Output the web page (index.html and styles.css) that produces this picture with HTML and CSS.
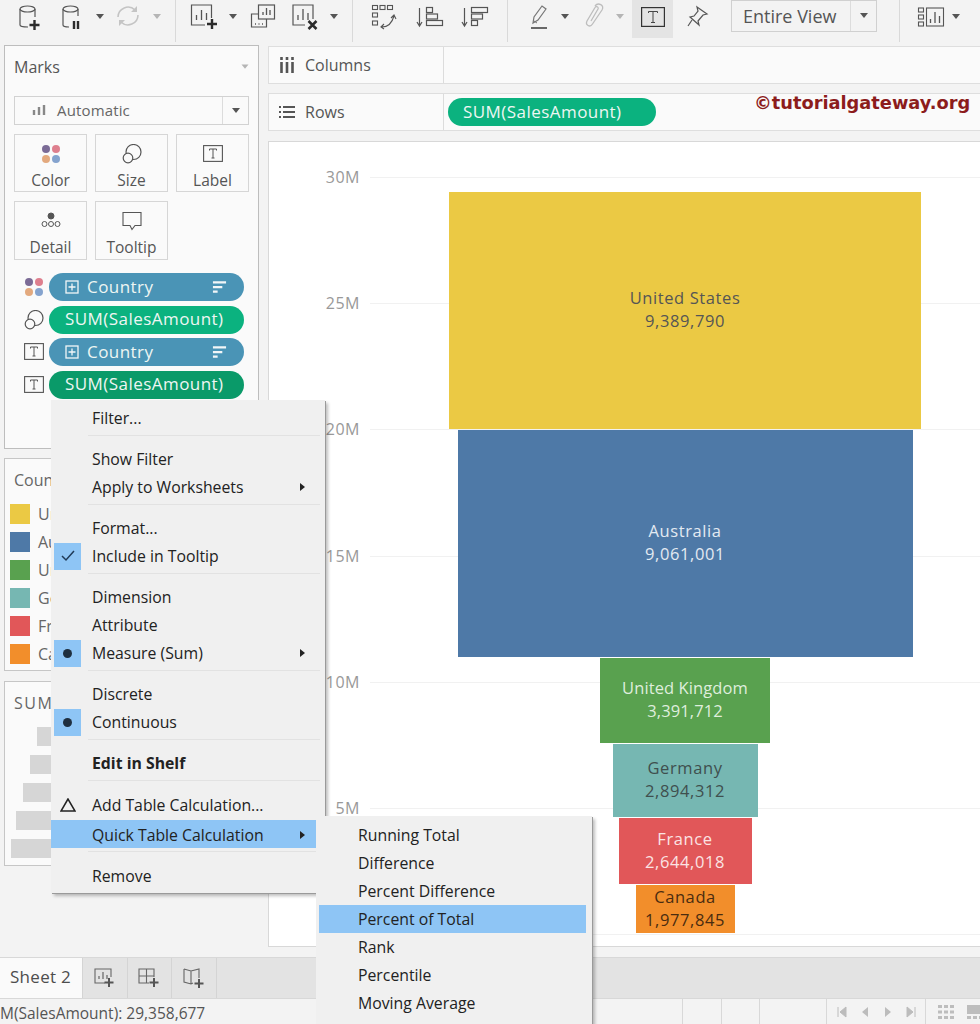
FILE: index.html
```html
<!DOCTYPE html>
<html lang="en">
<head>
<meta charset="utf-8">
<title>Tableau worksheet</title>
<link rel="stylesheet" href="styles.css">
</head>
<body>
<svg class="defs" width="0" height="0" aria-hidden="true">
  <symbol id="i-dots" viewBox="0 0 20 20">
    <circle cx="5" cy="5" r="4" fill="#7b6b96"/><circle cx="15" cy="5" r="4" fill="#de7f8e"/>
    <circle cx="5" cy="15" r="4" fill="#e3a97e"/><circle cx="15" cy="15" r="4" fill="#85a3ce"/>
  </symbol>
  <symbol id="i-size" viewBox="0 0 20 20">
    <circle cx="11.500" cy="8" r="7.500" fill="none" stroke="#555" stroke-width="1.200"/>
    <circle cx="6" cy="14" r="4.800" fill="#fafafa" stroke="#555" stroke-width="1.200"/>
  </symbol>
  <symbol id="i-t" viewBox="0 0 20 20">
    <rect x=".6" y="1.600" width="18.800" height="15.800" fill="none" stroke="#555" stroke-width="1.100"/>
    <path d="M6.500 6.500V5h7v1.500M10 5v9M8.500 14h3" fill="none" stroke="#555" stroke-width="1"/>
  </symbol>
  <symbol id="i-caret" viewBox="0 0 16 8"><path d="M4 1h8L8 6z" fill="#555"/></symbol>
  <symbol id="i-caret-l" viewBox="0 0 16 8"><path d="M4 1h8L8 6z" fill="#b5b5b5"/></symbol>
  <symbol id="i-plusbox" viewBox="0 0 14 14">
    <rect x="1" y="1" width="12" height="12" fill="none" stroke="#f2f6f8" stroke-width="1.300"/>
    <path d="M7 3.500v7M3.500 7h7" stroke="#f2f6f8" stroke-width="1.300"/>
  </symbol>
  <symbol id="i-sort" viewBox="0 0 16 14">
    <path d="M1 2h14M1 7h10M1 12h5" stroke="#f2f6f8" stroke-width="2.400"/>
  </symbol>
</svg>

<div class="app">
  <header class="toolbar">
    <svg class="tool" viewBox="0 0 28 34"><path d="M4 9v16c0 1.500 2 2 8 2M19 9v8" fill="none" stroke="#555" stroke-width="1.200"/><ellipse cx="11.500" cy="9" rx="7.500" ry="3" fill="none" stroke="#555" stroke-width="1.200"/><path d="M18.500 20v10M13.500 25h10" stroke="#2b2b2b" stroke-width="2.400"/></svg>
    <svg class="tool ml-14" viewBox="0 0 28 34"><path d="M5 9v16c0 1.500 2 2 6 2M20 9v7" fill="none" stroke="#555" stroke-width="1.200"/><ellipse cx="12.500" cy="9" rx="7.500" ry="3" fill="none" stroke="#555" stroke-width="1.200"/><path d="M16 21v8M20 21v8" stroke="#2b2b2b" stroke-width="2.400"/></svg>
    <svg class="caret ml-6"><use href="#i-caret"/></svg>
    <svg class="tool ml-6" viewBox="0 0 28 34"><path d="M4 17a10 10 0 0 1 17-7M24 15a10 10 0 0 1-17 7" fill="none" stroke="#c4c4c4" stroke-width="1.600"/><path d="M23 6v6h-6zM5 26v-6h6z" fill="#c4c4c4"/></svg>
    <svg class="caret ml-7"><use href="#i-caret-l"/></svg>
    <span class="tdiv"></span>
    <svg class="tool ml-5" viewBox="0 0 28 34"><path d="M15 25H1.500V5h20v13" fill="none" stroke="#555" stroke-width="1.200"/><path d="M6.500 20v-5M11.500 20V10M16.500 20v-7" stroke="#555" stroke-width="1.300"/><path d="M22 19v10M17 24h10" stroke="#2b2b2b" stroke-width="2.400"/></svg>
    <svg class="caret ml-7"><use href="#i-caret"/></svg>
    <svg class="tool ml-8" viewBox="0 0 28 34"><rect x="9.500" y="5" width="16" height="14" fill="#f3f3f3" stroke="#555" stroke-width="1.200"/><path d="M9 14H2.500v13h15v-8" fill="none" stroke="#555" stroke-width="1.200"/><path d="M14 15v-3M17.500 15V8M21 15v-5" stroke="#555" stroke-width="1.300"/><path d="M6 24h1M9.500 24h1M13 24h1" stroke="#555" stroke-width="1.400"/></svg>
    <svg class="tool ml-14" viewBox="0 0 28 34"><path d="M14 25H2V5h20v14" fill="none" stroke="#555" stroke-width="1.200"/><path d="M7 20v-5M12 20V9M17 20v-7" stroke="#555" stroke-width="1.300"/><path d="M17.500 21l8 8M25.500 21l-8 8" stroke="#2b2b2b" stroke-width="2.500"/></svg>
    <svg class="caret ml-7"><use href="#i-caret"/></svg>
    <span class="tdiv"></span>
    <svg class="tool ml-8" viewBox="0 0 28 34" fill="none" stroke="#555" stroke-width="1.100"><rect x="2.500" y="5.500" width="5" height="4"/><rect x="10" y="5.500" width="5" height="4"/><rect x="17.500" y="5.500" width="5" height="4"/><rect x="2.500" y="13" width="5" height="4"/><rect x="2.500" y="21" width="5" height="4"/><path d="M12 27c6 0 10-4 12-11M21 18l3-3 2 4M14 24l-3 3 3 2"/></svg>
    <svg class="tool ml-18" viewBox="0 0 28 34" fill="none" stroke="#555" stroke-width="1.200"><path d="M3.500 8v17M1 22l2.500 4 2.500-4"/><rect x="10.500" y="7.500" width="6" height="5"/><rect x="10.500" y="14" width="11" height="5"/><rect x="10.500" y="20.500" width="16" height="5"/></svg>
    <svg class="tool ml-17" viewBox="0 0 28 34" fill="none" stroke="#555" stroke-width="1.200"><path d="M3.500 8v17M1 22l2.500 4 2.500-4"/><rect x="10.500" y="7.500" width="16" height="5"/><rect x="10.500" y="14" width="11" height="5"/><rect x="10.500" y="20.500" width="6" height="5"/></svg>
    <span class="tdiv ml-8"></span>
    <svg class="tool ml-8" viewBox="0 0 28 34"><path d="M8 23l1-6L17 6l4 3-8 11z" fill="none" stroke="#777" stroke-width="1.200"/><path d="M9 21l3 2" stroke="#777"/><path d="M6 28h16" stroke="#2b2b2b" stroke-width="1.400"/></svg>
    <svg class="caret ml-4"><use href="#i-caret"/></svg>
    <svg class="tool ml-7" viewBox="0 0 28 34"><path d="M11 21L18 9c1-2-2-3.500-3-1.500L7 21c-2 4 3 7 5.500 3L22 10c3-5-4-8-7-4" fill="none" stroke="#bdbdbd" stroke-width="1.300"/></svg>
    <svg class="caret ml-4"><use href="#i-caret-l"/></svg>
    <span class="tool-on ml-4"><svg class="tbox" viewBox="0 0 24 20"><rect x=".6" y=".6" width="22.800" height="18.800" fill="none" stroke="#333" stroke-width="1.200"/><path d="M7.500 6V4.500h9V6M12 4.500v11M10 15.500h4" fill="none" stroke="#444" stroke-width="1"/></svg></span>
    <svg class="tool ml-10" viewBox="0 0 28 34"><path d="M14 7l10 7-4 1-5 6 1 4-9-8 4-1 4-5z" fill="none" stroke="#555" stroke-width="1.200"/><path d="M9 20l-4 6" stroke="#555" stroke-width="1.200"/></svg>
    <div class="fit ml-20"><span class="fit-label">Entire View</span><span class="fit-arrow"><svg class="caret"><use href="#i-caret"/></svg></span></div>
    <span class="tdiv ml-12"></span>
    <svg class="tool ml-8" viewBox="0 0 28 34" fill="none" stroke="#555" stroke-width="1.100"><rect x="1.500" y="8" width="5" height="4"/><rect x="1.500" y="15" width="5" height="4"/><rect x="1.500" y="22" width="5" height="4"/><rect x="9.500" y="8" width="17" height="18"/><path d="M13.500 23v-4M18 23V12M22.500 23v-7" stroke-width="1.300"/></svg>
    <svg class="caret ml-3"><use href="#i-caret"/></svg>
  </header>

  <main class="main">
    <aside class="side">
      <section class="card marks">
        <div class="marks-head"><span>Marks</span><svg class="caret"><use href="#i-caret-l"/></svg></div>
        <div class="marktype">
          <span class="marktype-label">
            <svg class="mini" viewBox="0 0 14 12"><path d="M2 11V6M7 11V3M12 11V1" stroke="#888" stroke-width="2.400"/></svg>
            Automatic
          </span>
          <span class="marktype-arrow"><svg class="caret"><use href="#i-caret"/></svg></span>
        </div>
        <div class="btns">
          <div class="btn"><svg class="btn-ico"><use href="#i-dots"/></svg>Color</div>
          <div class="btn"><svg class="btn-ico"><use href="#i-size"/></svg>Size</div>
          <div class="btn"><svg class="btn-ico"><use href="#i-t"/></svg>Label</div>
          <div class="btn btn-tall"><svg class="btn-ico" viewBox="0 0 20 20" fill="none" stroke="#555" stroke-width="1"><circle cx="10" cy="5" r="3" fill="#555"/><circle cx="3.500" cy="13" r="2.500"/><circle cx="10" cy="13" r="2.500"/><circle cx="16.500" cy="13" r="2.500"/></svg>Detail</div>
          <div class="btn btn-tall"><svg class="btn-ico" viewBox="0 0 20 20" fill="none" stroke="#555" stroke-width="1.100"><path d="M1 1.500h18v13h-6l-3 4-2-4H1z"/></svg>Tooltip</div>
        </div>
        <ul class="pills">
          <li class="pill-row"><svg class="pill-ico"><use href="#i-dots"/></svg><span class="pill pill-blue"><svg class="plus"><use href="#i-plusbox"/></svg>Country<svg class="sorter"><use href="#i-sort"/></svg></span></li>
          <li class="pill-row"><svg class="pill-ico"><use href="#i-size"/></svg><span class="pill pill-green">SUM(SalesAmount)</span></li>
          <li class="pill-row"><svg class="pill-ico"><use href="#i-t"/></svg><span class="pill pill-blue"><svg class="plus"><use href="#i-plusbox"/></svg>Country<svg class="sorter"><use href="#i-sort"/></svg></span></li>
          <li class="pill-row"><svg class="pill-ico"><use href="#i-t"/></svg><span class="pill pill-dark">SUM(SalesAmount)</span></li>
        </ul>
      </section>

      <section class="card legend">
        <div class="card-title">Country</div>
        <ul class="legend-list">
          <li class="legend-row"><i class="swatch c-us"></i>United States</li>
          <li class="legend-row"><i class="swatch c-au"></i>Australia</li>
          <li class="legend-row"><i class="swatch c-uk"></i>United Kingdom</li>
          <li class="legend-row"><i class="swatch c-de"></i>Germany</li>
          <li class="legend-row"><i class="swatch c-fr"></i>France</li>
          <li class="legend-row"><i class="swatch c-ca"></i>Canada</li>
        </ul>
      </section>

      <section class="card sizes">
        <div class="card-title card-title-wide">SUM(SalesAmount)</div>
        <div class="size-bars">
          <i class="size-bar" style="width:216px"></i>
          <i class="size-bar" style="width:223px"></i>
          <i class="size-bar" style="width:230px"></i>
          <i class="size-bar" style="width:237px"></i>
          <i class="size-bar" style="width:242px"></i>
        </div>
      </section>
    </aside>

    <div class="work">
      <div class="shelf shelf-cols">
        <div class="shelf-label"><svg class="shelf-ico" viewBox="0 0 16 16"><path d="M2.500 5v11M8 5v11M13.500 5v11M2.500 0v3M8 0v3M13.500 0v3" stroke="#555" stroke-width="2.600"/></svg>Columns</div>
      </div>
      <div class="shelf shelf-rows">
        <div class="shelf-label"><svg class="shelf-ico" viewBox="0 0 16 16"><path d="M4 3h12M4 8h12M4 13h12M0 3h2M0 8h2M0 13h2" stroke="#555" stroke-width="2"/></svg>Rows</div>
        <span class="pill pill-green shelf-pill">SUM(SalesAmount)</span>
        <span class="mark-wm">©tutorialgateway.org</span>
      </div>
      <div class="chart">
        <div class="axis">
          <div class="tick"><span class="tick-label">30M</span><i class="grid-line"></i></div>
          <div class="tick"><span class="tick-label">25M</span><i class="grid-line"></i></div>
          <div class="tick"><span class="tick-label">20M</span><i class="grid-line"></i></div>
          <div class="tick"><span class="tick-label">15M</span><i class="grid-line"></i></div>
          <div class="tick"><span class="tick-label">10M</span><i class="grid-line"></i></div>
          <div class="tick"><span class="tick-label">5M</span><i class="grid-line"></i></div>
          <div class="tick"><span class="tick-label">0M</span><i class="grid-line"></i></div>
        </div>
        <div class="funnel">
          <div class="bar c-us bar-us"><span>United States</span><span>9,389,790</span></div>
          <div class="bar c-au bar-au"><span>Australia</span><span>9,061,001</span></div>
          <div class="bar c-uk bar-uk"><span>United Kingdom</span><span>3,391,712</span></div>
          <div class="bar c-de bar-de"><span>Germany</span><span>2,894,312</span></div>
          <div class="bar c-fr bar-fr"><span>France</span><span>2,644,018</span></div>
          <div class="bar c-ca bar-ca"><span>Canada</span><span>1,977,845</span></div>
        </div>
      </div>
    </div>
  </main>

  <nav class="tabs">
    <div class="tab-sheet">Sheet 2</div>
    <div class="tab-new"><svg class="tab-ico" viewBox="0 0 24 24"><path d="M12 17H2V3h16v8" fill="none" stroke="#666" stroke-width="1.100"/><path d="M6 13v-3M10 13V6M14 13V9" stroke="#666" stroke-width="1.200"/><path d="M16 12v9M11.500 16.500h9" stroke="#555" stroke-width="2"/></svg></div>
    <div class="tab-new"><svg class="tab-ico" viewBox="0 0 24 24"><path d="M12 17H2V3h15v8M2 10h15M9.500 3v14" fill="none" stroke="#666" stroke-width="1.100"/><path d="M17 12v9M12.500 16.500h9" stroke="#555" stroke-width="2"/></svg></div>
    <div class="tab-new"><svg class="tab-ico" viewBox="0 0 24 24"><path d="M2 3l7 2 8-2v9M11 17l-2 1-7-2V3M9 5v13" fill="none" stroke="#666" stroke-width="1.100"/><path d="M17 13v9M12.500 17.500h9" stroke="#555" stroke-width="2"/></svg></div>
  </nav>

  <footer class="status">
    <span class="status-text">M(SalesAmount): 29,358,677</span>
    <span class="cell cell-a"></span>
    <span class="cell cell-b"></span>
    <span class="cell cell-b"></span>
    <span class="cell cell-c"></span>
    <span class="cell cell-nav">
      <svg class="nav" viewBox="0 0 12 12"><path d="M2 1v10M10 1v10L4 6z" fill="#bcbcbc" stroke="#bcbcbc"/></svg>
      <svg class="nav" viewBox="0 0 12 12"><path d="M9 1v10L3 6z" fill="#bcbcbc"/></svg>
      <svg class="nav" viewBox="0 0 12 12"><path d="M3 1v10l6-5z" fill="#bcbcbc"/></svg>
      <svg class="nav" viewBox="0 0 12 12"><path d="M2 1v10l6-5zM10 1v10" fill="#bcbcbc" stroke="#bcbcbc"/></svg>
    </span>
    <span class="views">
      <svg class="view" viewBox="0 0 16 14"><path d="M0 1.500h4M6 1.500h4M12 1.500h4M0 7h4M6 7h4M12 7h4M0 12.500h4M6 12.500h4M12 12.500h4" stroke="#bdbdbd" stroke-width="3"/></svg>
      <svg class="view" viewBox="0 0 16 14"><path d="M0 0h16v9H0z" fill="#bdbdbd"/><path d="M0 12.500h4M6 12.500h4M12 12.500h4" stroke="#bdbdbd" stroke-width="3"/></svg>
    </span>
  </footer>

  <div class="menu menu-main">
    <div class="mi"><i class="gut"></i>Filter...</div>
    <hr class="sep">
    <div class="mi"><i class="gut"></i>Show Filter</div>
    <div class="mi"><i class="gut"></i>Apply to Worksheets<i class="arrow"></i></div>
    <hr class="sep">
    <div class="mi"><i class="gut"></i>Format...</div>
    <div class="mi"><i class="gut on"><svg class="check" viewBox="0 0 14 12"><path d="M1 6l4 4 8-9" fill="none" stroke="#1f3a57" stroke-width="1.500"/></svg></i>Include in Tooltip</div>
    <hr class="sep">
    <div class="mi"><i class="gut"></i>Dimension</div>
    <div class="mi"><i class="gut"></i>Attribute</div>
    <div class="mi"><i class="gut on"><b class="dot"></b></i>Measure (Sum)<i class="arrow"></i></div>
    <hr class="sep">
    <div class="mi"><i class="gut"></i>Discrete</div>
    <div class="mi"><i class="gut on"><b class="dot"></b></i>Continuous</div>
    <hr class="sep">
    <div class="mi mi-bold"><i class="gut"></i>Edit in Shelf</div>
    <hr class="sep sep-wide">
    <div class="mi"><i class="gut"><svg class="delta" viewBox="0 0 16 14"><path d="M8 1L1 13h14z" fill="none" stroke="#222" stroke-width="1.500"/></svg></i>Add Table Calculation...</div>
    <div class="mi mi-active"><i class="gut"></i>Quick Table Calculation<i class="arrow"></i></div>
    <hr class="sep sep-wide">
    <div class="mi"><i class="gut"></i>Remove</div>
  </div>

  <div class="menu menu-sub">
    <div class="si">Running Total</div>
    <div class="si">Difference</div>
    <div class="si">Percent Difference</div>
    <div class="si si-active">Percent of Total</div>
    <div class="si">Rank</div>
    <div class="si">Percentile</div>
    <div class="si">Moving Average</div>
  </div>
</div>
</body>
</html>
```
FILE: styles.css
```css
* { box-sizing: border-box; }
html, body { margin: 0; padding: 0; }
body { font-family: "Open Sans", "Liberation Sans", sans-serif; color: #444; background: #f3f3f3; }
ul { list-style: none; margin: 0; padding: 0; }
i { font-style: normal; display: block; }
.defs { position: absolute; }

.app { position: relative; display: flex; flex-direction: column; width: 980px; height: 1024px; overflow: hidden; background: #f3f3f3; }

/* toolbar */
.toolbar { flex: none; display: flex; align-items: flex-start; height: 45px; padding-left: 16px; }
.tool { flex: none; display: block; width: 28px; height: 34px; }
.caret { flex: none; display: block; width: 16px; height: 8px; margin-top: 13px; }
.tdiv { flex: none; display: block; width: 20px; height: 42px; }
.tdiv::after { content: ""; display: block; width: 1px; height: 42px; margin-left: 10px; background: #d9d9d9; }
.tool-on { flex: none; display: flex; justify-content: center; width: 41px; height: 38px; padding-top: 7px; background: #e4e4e4; }
.tbox { display: block; width: 24px; height: 20px; }
.fit { flex: none; display: flex; width: 146px; height: 32px; border: 1px solid #d0d0d0; font-size: 18px; color: #555; }
.fit-label { flex: 1; line-height: 30px; padding-left: 11px; border-right: 1px solid #dcdcdc; }
.fit-arrow { flex: none; display: flex; justify-content: center; width: 25px; }
.fit-arrow .caret { margin-top: 11px; }
.ml-3 { margin-left: 3px; } .ml-4 { margin-left: 4px; } .ml-5 { margin-left: 5px; }
.ml-6 { margin-left: 6px; } .ml-7 { margin-left: 7px; } .ml-8 { margin-left: 8px; }
.ml-10 { margin-left: 10px; } .ml-12 { margin-left: 12px; } .ml-14 { margin-left: 14px; }
.ml-17 { margin-left: 17px; } .ml-18 { margin-left: 18px; } .ml-20 { margin-left: 20px; }

/* layout */
.main { flex: 1; display: flex; min-height: 0; }
.side { flex: none; width: 268px; padding-left: 4px; }
.work { flex: 1; display: flex; flex-direction: column; padding-top: 1px; }

.card { width: 255px; background: #fafafa; border: 1px solid #c6c6c6; }
.marks { height: 404px; padding: 0 9px; border-color: #bdbdbd; }
.marks-head { display: flex; align-items: center; justify-content: space-between; height: 50px; padding-bottom: 8px; font-size: 16px; color: #555; }
.marks-head .caret { margin-top: 0; width: 14px; margin-right: -3px; }
.marktype { display: flex; height: 29px; border: 1px solid #d2d2d2; font-size: 15px; letter-spacing: .15px; color: #666; }
.marktype-label { flex: 1; display: flex; align-items: center; gap: 11px; padding: 0 0 2px 17px; border-right: 1px solid #dcdcdc; }
.mini { display: block; width: 14px; height: 12px; }
.marktype-arrow { flex: none; display: flex; justify-content: center; width: 25px; }
.marktype-arrow .caret { margin-top: 10px; }

.btns { display: grid; grid-template-columns: repeat(3, 73px); column-gap: 8px; row-gap: 9px; margin-top: 9px; }
.btn { display: flex; flex-direction: column; align-items: center; height: 58px; padding-top: 9px; border: 1px solid #d6d6d6; font-size: 15.500px; line-height: 18px; color: #555; }
.btn-tall { height: 59px; }
.btn-ico { display: block; width: 20px; height: 20px; margin-bottom: 7px; }

.pills { margin-top: 13px; padding-left: 10px; }
.pill-row { display: flex; align-items: center; gap: 5px; height: 28px; margin-bottom: 4.500px; }
.pill-ico { flex: none; display: block; width: 20px; height: 20px; }
.pill { display: flex; align-items: center; height: 28px; padding-bottom: 2px; border-radius: 14px; font-size: 17px; letter-spacing: .45px; color: #eef6f3; white-space: nowrap; }
.pill-row .pill { width: 195px; padding-left: 16px; padding-right: 17px; }
.pill-blue { background: #4a94b6; }
.pill-green { background: #0bb27f; }
.pill-dark { background: #0a9a69; }
.plus { flex: none; display: block; width: 14px; height: 14px; margin: 2px 8px 0 0; }
.sorter { flex: none; display: block; width: 15px; height: 14px; margin: 2px 0 0 auto; }

.legend { height: 213px; margin-top: 9px; padding: 10px 0 0 5px; overflow: hidden; }
.card-title { height: 22px; margin-left: 4px; font-size: 16px; line-height: 22px; color: #666; white-space: nowrap; }
.card-title-wide { letter-spacing: 1.500px; }
.legend-list { margin-top: 13px; }
.legend-row { display: flex; gap: 8px; height: 28px; font-size: 16px; line-height: 20px; color: #666; }
.swatch { flex: none; width: 20px; height: 20px; }
.c-us { background: #ebc944; }
.c-au { background: #4e79a7; }
.c-uk { background: #59a14f; }
.c-de { background: #76b7b2; }
.c-fr { background: #e15759; }
.c-ca { background: #f28e2b; }

.sizes { height: 185px; margin-top: 10px; padding: 10px 5px 0 5px; }
.size-bars { display: flex; flex-direction: column; align-items: flex-end; gap: 9px; margin-top: 13px; }
.size-bar { height: 19px; background: #d6d6d6; }

/* shelves */
.shelf { flex: none; display: flex; align-items: center; height: 38px; background: #fafafa; border: 1px solid #dedede; border-right: 0; }
.shelf-rows { margin-top: 9px; }
.shelf-label { flex: none; display: flex; align-items: center; align-self: stretch; gap: 10px; width: 175px; padding-left: 10px; border-right: 1px solid #dcdcdc; font-size: 16px; color: #555; }
.shelf-ico { display: block; width: 16px; height: 16px; }
.pill.shelf-pill { flex: none; width: 208px; margin-left: 4px; padding-left: 15px; }
.mark-wm { flex: none; align-self: flex-start; margin: -4px 0 0 98px; font-family: "DejaVu Sans", sans-serif; font-size: 17.800px; font-weight: 700; line-height: 26px; color: #8c1c1c; white-space: nowrap; }

/* chart */
.chart { flex: none; display: grid; height: 806px; margin-top: 10px; background: #fff; border: 1px solid #d8d8d8; border-right: 0; }
.axis, .funnel { grid-area: 1 / 1; }
.axis { padding-top: 23px; }
.tick { display: flex; height: 126.200px; }
.tick-label { flex: none; width: 91px; height: 24px; font-size: 16px; letter-spacing: .5px; line-height: 24px; text-align: right; color: #999; }
.grid-line { flex: 1; height: 1px; margin: 12px 0 0 10px; background: #f1f1f1; }
.funnel { display: flex; flex-direction: column; align-items: center; gap: 1px; width: 480px; margin-left: 176px; padding-top: 50px; }
.bar { flex: none; display: flex; flex-direction: column; align-items: center; justify-content: center; padding-bottom: 3px; font-size: 16.500px; letter-spacing: .6px; line-height: 23px; white-space: nowrap; }
.bar-us { width: 472px; height: 237px; color: #555; }
.bar-au { width: 455px; height: 227px; color: #e3eaf2; }
.bar-uk { width: 170px; height: 85px; letter-spacing: .1px; color: #dfeedd; }
.bar-de { width: 145px; height: 73px; color: #3f4f4e; }
.bar-fr { width: 133px; height: 66px; color: #fbe3e3; }
.bar-ca { width: 99px; height: 48px; color: #4a2c10; }

/* tabs & status */
.tabs { flex: none; display: flex; height: 41px; background: #e3e3e3; border-top: 1px solid #d8d8d8; }
.tab-sheet { flex: none; width: 83px; padding-left: 10px; background: #fafafa; border-right: 1px solid #d4d4d4; font-size: 17px; letter-spacing: .3px; line-height: 37px; color: #4d4d4d; }
.tab-new { flex: none; display: flex; align-items: center; justify-content: center; width: 44.500px; border-right: 1px solid #d4d4d4; }
.tab-ico { display: block; width: 24px; height: 24px; }
.status { flex: none; display: flex; height: 26px; border-top: 1px solid #d8d8d8; background: #f3f3f3; }
.status-text { flex: none; width: 607px; font-size: 15.500px; line-height: 29px; color: #555; white-space: nowrap; }
.cell { flex: none; height: 100%; border-right: 1px solid #d8d8d8; }
.cell-a { width: 76px; }
.cell-b { width: 38.500px; }
.cell-c { width: 67px; }
.cell-nav { display: flex; align-items: center; gap: 11px; width: 99px; padding-left: 9px; }
.nav { display: block; width: 12px; height: 12px; }
.views { display: flex; align-items: center; gap: 13px; padding-left: 12px; }
.view { display: block; flex: none; width: 16px; height: 14px; }

/* context menus */
.menu { position: absolute; background: #f0f0f0; box-shadow: 1px 1px 0 #9a9a9a, 3px 3px 3px rgba(0, 0, 0, .25); font-size: 15.800px; color: #222; }
.menu-main { left: 51px; top: 400px; width: 274px; padding: 4px 0 3px; }
.menu-sub { left: 316px; top: 816px; width: 276px; height: 230px; padding: 5px 0 0; }
.mi { display: flex; align-items: center; height: 28px; padding-left: 3px; padding-right: 20px; white-space: nowrap; }
.gut { flex: none; display: flex; align-items: center; justify-content: center; width: 27px; height: 27px; margin-right: 11px; }
.gut.on { background: #8ec5f5; }
.check { display: block; width: 14px; height: 12px; }
.dot { display: block; width: 9px; height: 9px; border-radius: 50%; background: #1f2f3f; }
.delta { display: block; width: 16px; height: 14px; }
.arrow { width: 0; height: 0; margin-left: auto; border-left: 5px solid #222; border-top: 4px solid transparent; border-bottom: 4px solid transparent; }
.mi-bold { font-weight: 700; }
.mi-active { margin-top: 1px; padding-top: 2px; background: #8ec5f5; }
.sep { height: 1px; margin: 3px 5px 9px 37px; border: 0; background: #e2e2e2; }
.sep-wide { margin-bottom: 10px; }
.si { height: 28px; margin: 0 6px 0 3px; padding-left: 39px; line-height: 28px; white-space: nowrap; }
.si-active { background: #8ec5f5; }
```
